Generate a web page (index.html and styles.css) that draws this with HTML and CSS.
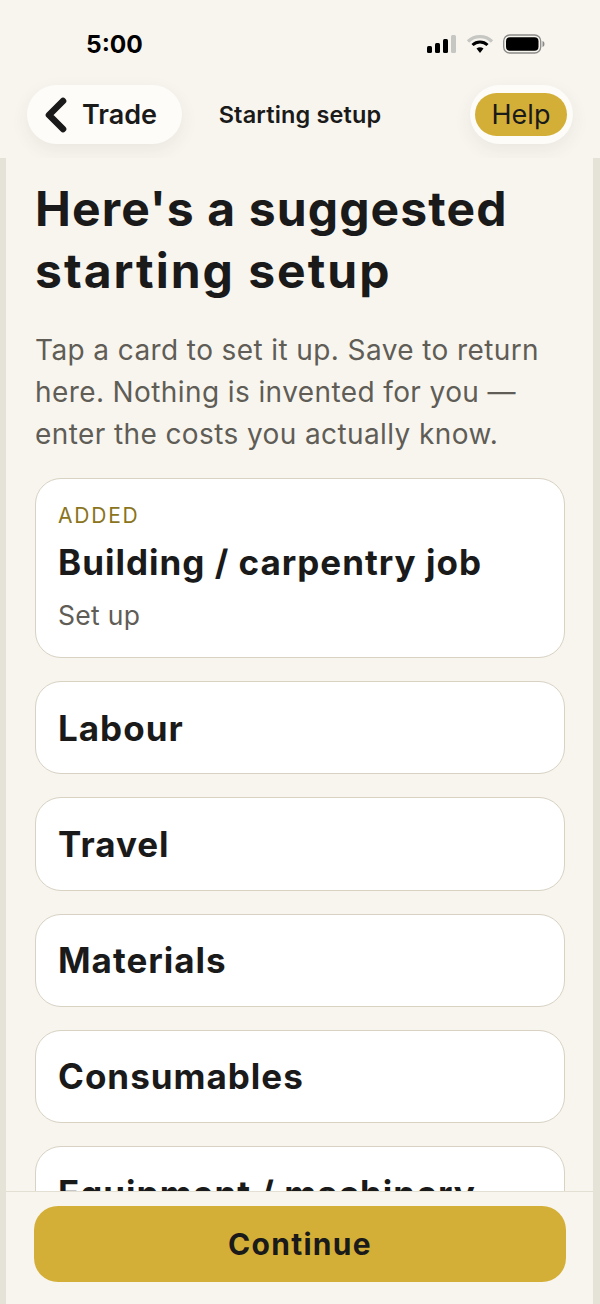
FILE: index.html
```html
<!DOCTYPE html>
<html lang="en">
<head>
  <meta charset="UTF-8">
  <meta name="viewport" content="width=device-width, initial-scale=1.0">
  <title>Starting setup</title>
  <link rel="stylesheet" href="styles.css">
</head>
<body>
  <div class="screen">
    <div class="status-bar">
      <span class="status-time">5:00</span>
      <div class="status-icons">
        <svg width="30" height="20" viewBox="0 0 30 20">
          <rect x="0" y="12" width="5" height="7" rx="1.5" fill="#000"/>
          <rect x="8" y="9" width="5" height="10" rx="1.5" fill="#000"/>
          <rect x="16" y="5" width="5" height="14" rx="1.5" fill="#000"/>
          <rect x="24" y="1" width="5" height="18" rx="1.5" fill="#c6c6c2"/>
        </svg>
        <svg width="28" height="20" viewBox="0 0 28 20">
          <path d="M2 7.5a17 17 0 0 1 24 0" fill="none" stroke="#c6c6c2" stroke-width="3.2"/>
          <path d="M6.5 11a11 11 0 0 1 15 0" fill="none" stroke="#000" stroke-width="3"/>
          <path d="M10.5 14.6a5.5 5.5 0 0 1 7 0L14 19z" fill="#000"/>
        </svg>
        <svg width="42" height="20" viewBox="0 0 42 20">
          <rect x="0.7" y="1" width="37" height="18" rx="6" fill="none" stroke="#8a8a88" stroke-width="1.3"/>
          <rect x="3" y="3.2" width="32.5" height="13.6" rx="4" fill="#000"/>
          <path d="M39.5 7v6a3 3 0 0 0 2-3 3 3 0 0 0-2-3z" fill="#8a8a88"/>
        </svg>
      </div>
    </div>

    <header class="nav">
      <button class="back-pill">
        <svg width="26" height="36" viewBox="0 0 26 36">
          <path d="M20 4 6 18l14 14" fill="none" stroke="#1a1a1a" stroke-width="6.6" stroke-linecap="round" stroke-linejoin="round"/>
        </svg>
        <span>Trade</span>
      </button>
      <span class="nav-title">Starting setup</span>
      <div class="help-pill"><button class="help-btn">Help</button></div>
    </header>

    <div class="body">
      <main class="content">
        <h1>Here's a suggested <span class="h1-second">starting setup</span></h1>
        <p class="intro">Tap a card to set it up. Save to return here. Nothing is invented for you — enter the costs you actually know.</p>
        <div class="card card-added">
          <span class="card-tag">ADDED</span>
          <span class="card-title">Building / carpentry job</span>
          <span class="card-sub">Set up</span>
        </div>
        <div class="card"><span class="card-title">Labour</span></div>
        <div class="card"><span class="card-title">Travel</span></div>
        <div class="card"><span class="card-title">Materials</span></div>
        <div class="card"><span class="card-title">Consumables</span></div>
        <div class="card"><span class="card-title">Equipment / machinery</span></div>
      </main>
      <footer class="footer">
        <button class="continue">Continue</button>
      </footer>
    </div>
  </div>
</body>
</html>
```

FILE: styles.css
```css
* {
  box-sizing: border-box;
}
body {
  margin: 0;
  font-family: 'Inter', 'Lato', sans-serif;
  color: #1a1a1a;
  background-color: #f8f5ef;
}
button {
  font-family: inherit;
  color: inherit;
  border: none;
  cursor: pointer;
}
.screen {
  width: 600px;
  height: 1304px;
  display: flex;
  flex-direction: column;
  overflow: hidden;
}

/* status bar */
.status-bar {
  height: 85px;
  padding: 34px 55px 0 86px;
  display: flex;
  justify-content: space-between;
  align-items: flex-start;
}
.status-time {
  font-size: 24.5px;
  line-height: 21px;
  font-weight: 700;
  color: #000;
}
.status-icons {
  display: flex;
  align-items: center;
  gap: 9px;
}

/* nav row */
.nav {
  height: 73px;
  padding: 0 27px 14px;
  display: grid;
  grid-template-columns: 1fr auto 1fr;
  align-items: center;
}
.back-pill {
  justify-self: start;
  width: 155px;
  height: 59px;
  padding: 0 0 0 16px;
  display: flex;
  align-items: center;
  gap: 13px;
  border-radius: 30px;
  background: #fdfcf8;
  box-shadow: 0 6px 18px rgba(60, 50, 30, 0.07);
  font-size: 27px;
  font-weight: 600;
}
.nav-title {
  font-size: 23.5px;
  font-weight: 600;
  letter-spacing: 0.15px;
}
.help-pill {
  justify-self: end;
  width: 103px;
  height: 59px;
  padding: 8px 6px 8px 5px;
  border-radius: 30px;
  background: #fdfcf8;
  box-shadow: 0 6px 18px rgba(60, 50, 30, 0.07);
}
.help-btn {
  width: 100%;
  height: 43px;
  padding: 0;
  border-radius: 22px;
  background: #d4af37;
  font-size: 27px;
  font-weight: 400;
}

.body {
  flex: 1;
  min-height: 0;
  display: flex;
  flex-direction: column;
  padding: 0 7px 0 6px;
  background: #e5e3d8;
}
.content {
  flex: 1;
  min-height: 0;
  overflow: hidden;
  padding: 20px 28px 0 29px;
  background: #f8f5ef;
  display: flex;
  flex-direction: column;
  gap: 23px;
}
h1 {
  margin: 0;
  font-size: 48px;
  line-height: 62px;
  font-weight: 700;
  letter-spacing: 1.1px;
}
.h1-second {
  display: block;
  letter-spacing: 2px;
}
.intro {
  margin: 4px 0 0;
  font-size: 28px;
  line-height: 42px;
  letter-spacing: 0.4px;
  color: #5f5d56;
}
.card {
  flex: none;
  height: 93.25px;
  padding: 0 22px;
  display: flex;
  flex-direction: column;
  justify-content: center;
  background: #fff;
  border: 1.5px solid #d8d2c3;
  border-radius: 26px;
}
.card-added {
  height: 180px;
  padding-top: 24px;
  justify-content: flex-start;
}
.card-tag {
  font-size: 21px;
  line-height: 26px;
  letter-spacing: 1.8px;
  color: #8a7420;
}
.card-title {
  font-size: 35px;
  line-height: 46px;
  font-weight: 700;
  letter-spacing: 1px;
}
.card-added .card-title {
  margin-top: 10px;
}
.card-sub {
  margin-top: 13px;
  font-size: 26.5px;
  line-height: 34px;
  letter-spacing: 0.3px;
  color: #5f5d56;
}
.footer {
  flex: none;
  height: 113px;
  padding: 14px 27px 0 28px;
  background: #f8f5ef;
  border-top: 1.5px solid #e3dfd2;
}
.continue {
  display: block;
  width: 100%;
  height: 76px;
  border-radius: 24px;
  background: #d4af37;
  font-size: 30px;
  font-weight: 700;
  letter-spacing: 1.3px;
}
```
